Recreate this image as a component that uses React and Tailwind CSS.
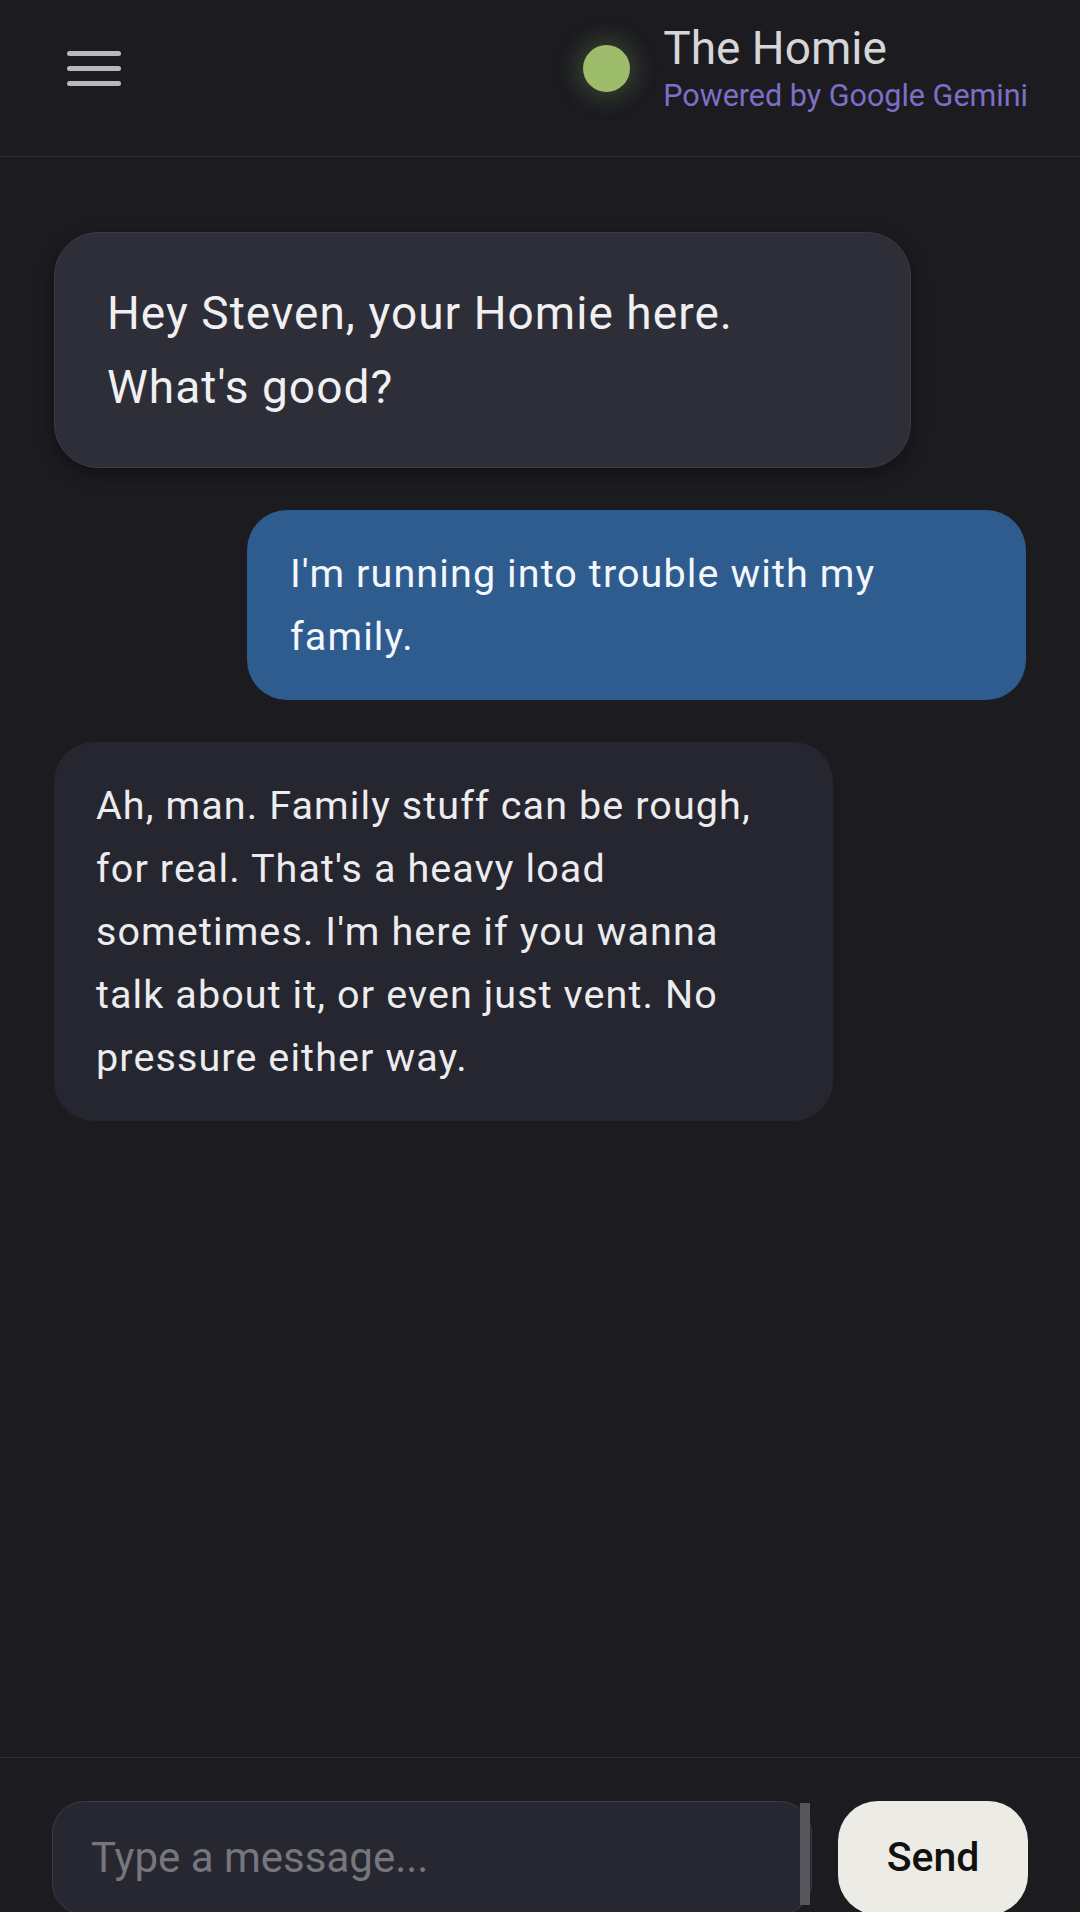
import React from "react";

const messages = [
  { from: "bot", big: true, text: "Hey Steven, your Homie here. What's good?" },
  { from: "me", text: "I'm running into trouble with my family." },
  {
    from: "bot",
    text: "Ah, man. Family stuff can be rough, for real. That's a heavy load sometimes. I'm here if you wanna talk about it, or even just vent. No pressure either way.",
  },
];

const Bubble = ({ msg }) => {
  if (msg.big) {
    return (
      <div className="self-start w-[857px] rounded-[44px] border border-[#3a3b46] bg-[#2d2e37] pl-[52px] pr-[54px] py-[43px] text-[46px] leading-[74px] tracking-[1.05px] text-[#f0f0f2] shadow-[0_6px_18px_rgba(0,0,0,0.35)]">
        {msg.text}
      </div>
    );
  }
  if (msg.from === "me") {
    return (
      <div className="self-end max-w-[779px] rounded-[40px] bg-[#2e5c8f] px-[43px] py-[32px] text-[39.5px] leading-[63px] tracking-[1.1px] text-[#f3f6fa]">
        {msg.text}
      </div>
    );
  }
  return (
    <div className="self-start max-w-[779px] rounded-[40px] bg-[#25262f] px-[42px] py-[32px] text-[39.5px] leading-[63px] tracking-[1.1px] text-[#ececee]">
      {msg.text}
    </div>
  );
};

export default function App() {
  return (
    <div
      className="flex h-[1912px] w-[1080px] flex-col overflow-hidden bg-[#1b1b20]"
      style={{ fontFamily: "Roboto, 'Liberation Sans', sans-serif" }}
    >
      {/* Header */}
      <header className="flex h-[157px] shrink-0 items-center justify-between border-b border-[#2e2e34] pb-[20px] pl-[67px] pr-[52px]">
        <button className="flex flex-col gap-[10px]" aria-label="Menu">
          <span className="block h-[5px] w-[54px] rounded-full bg-[#b9b9b9]" />
          <span className="block h-[5px] w-[54px] rounded-full bg-[#b9b9b9]" />
          <span className="block h-[5px] w-[54px] rounded-full bg-[#b9b9b9]" />
        </button>

        <div className="flex items-center gap-[33px]">
          <div className="h-[47px] w-[47px] rounded-full bg-[#9dbd6c] shadow-[0_0_22px_8px_rgba(140,180,90,0.22)]" />
          <div className="flex flex-col">
            <span className="text-[46px] leading-[48px] text-[#d6d6d8]">The Homie</span>
            <span className="mt-[6px] text-[30.5px] leading-[35px] text-[#7c6fc6]">Powered by Google Gemini</span>
          </div>
        </div>
      </header>

      {/* Chat */}
      <main className="flex h-[1600px] shrink-0 flex-col gap-[42px] px-[54px] pt-[75px]">
        {messages.map((m, i) => (
          <Bubble key={i} msg={m} />
        ))}
      </main>

      {/* Composer */}
      <footer className="flex shrink-0 items-start gap-[26px] border-t border-[#2e2e34] px-[52px] pt-[43px]">
        <div className="relative flex-1">
          <textarea
            rows={1}
            placeholder="Type a message..."
            className="block h-[114px] w-full resize-none rounded-[32px] border border-[#3a3b45] bg-[#262730] px-[38px] py-[28px] text-[42px] leading-[56px] text-[#e5e5e5] placeholder:text-[#76767c] outline-none"
          />
          {/* scrollbar thumb */}
          <div className="absolute right-[2px] top-[2px] h-[102px] w-[10px] bg-[#56565c]" />
        </div>
        <button className="flex h-[114px] w-[190px] items-center justify-center rounded-[40px] bg-[#ecebe6] text-[41px] font-medium text-[#111111]">
          Send
        </button>
      </footer>
    </div>
  );
}
